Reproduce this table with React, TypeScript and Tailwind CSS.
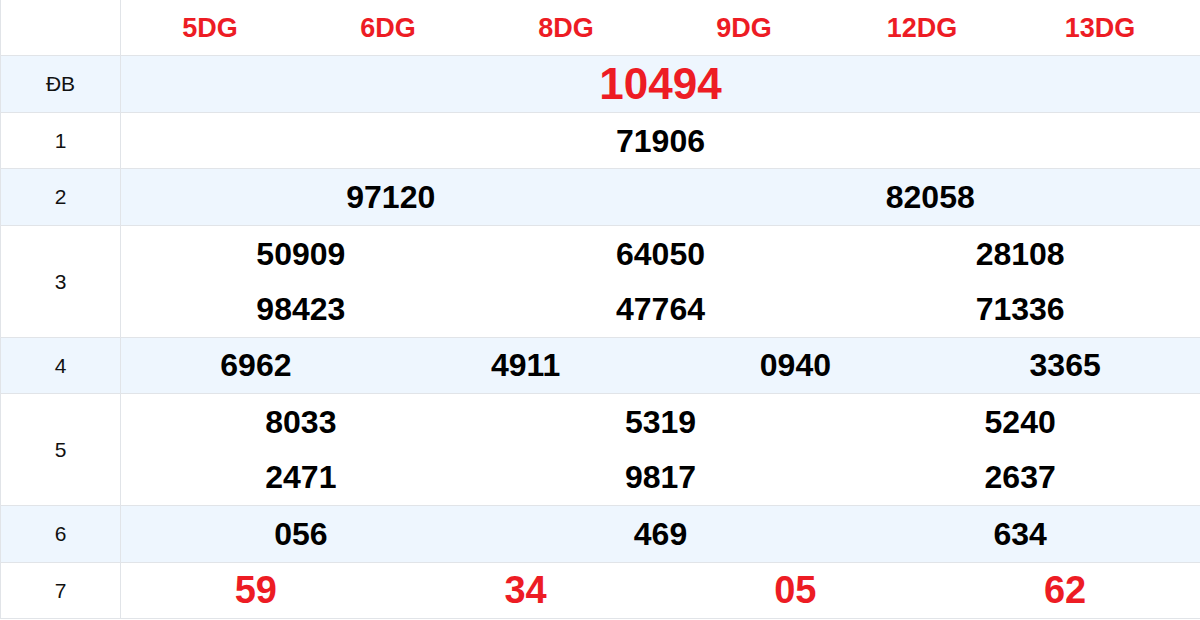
// Bảng kết quả xổ số — header mã vé + các giải ĐB..7.
const HEADERS = ["5DG", "6DG", "8DG", "9DG", "12DG", "13DG"];

type Prize = {
  label: string;
  // mỗi phần tử là một dòng số trong ô
  lines: string[][];
  cols: number;
  shaded?: boolean;
  size: "special" | "normal" | "small";
};

const PRIZES: Prize[] = [
  { label: "ĐB", lines: [["10494"]], cols: 1, shaded: true, size: "special" },
  { label: "1", lines: [["71906"]], cols: 1, size: "normal" },
  { label: "2", lines: [["97120", "82058"]], cols: 2, shaded: true, size: "normal" },
  {
    label: "3",
    lines: [
      ["50909", "64050", "28108"],
      ["98423", "47764", "71336"],
    ],
    cols: 3,
    size: "normal",
  },
  { label: "4", lines: [["6962", "4911", "0940", "3365"]], cols: 4, shaded: true, size: "normal" },
  {
    label: "5",
    lines: [
      ["8033", "5319", "5240"],
      ["2471", "9817", "2637"],
    ],
    cols: 3,
    size: "normal",
  },
  { label: "6", lines: [["056", "469", "634"]], cols: 3, shaded: true, size: "normal" },
  { label: "7", lines: [["59", "34", "05", "62"]], cols: 4, size: "small" },
];

const GRID_COLS: Record<number, string> = {
  1: "grid-cols-1",
  2: "grid-cols-2",
  3: "grid-cols-3",
  4: "grid-cols-4",
};

const SIZE_CLASS: Record<Prize["size"], string> = {
  special: "text-[44px] text-[#ed1c24]",
  normal: "text-[32px] text-black",
  small: "text-[38px] text-[#ed1c24]",
};

function PrizeRow({ prize }: { prize: Prize }) {
  const bg = prize.shaded ? "bg-[#eef6fe]" : "bg-white";
  return (
    <div
      className={`flex border-b border-[#e1e4e8] ${bg}`}
      style={{ flexGrow: prize.lines.length, flexBasis: 0 }}
    >
      <div className="flex w-[120px] shrink-0 items-center justify-center border-r border-[#e1e4e8] text-[21px] text-[#111]">
        {prize.label}
      </div>
      <div className="flex flex-1 flex-col">
        {prize.lines.map((line, i) => (
          <div key={i} className={`grid flex-1 ${GRID_COLS[prize.cols]}`}>
            {line.map((num, j) => (
              <div
                key={j}
                className={`flex items-center justify-center font-bold leading-none ${SIZE_CLASS[prize.size]}`}
              >
                {num}
              </div>
            ))}
          </div>
        ))}
      </div>
    </div>
  );
}

export default function App() {
  return (
    <div
      className="flex h-[619px] w-[1200px] flex-col border-l border-[#e1e4e8] bg-white"
      style={{ fontFamily: '"Liberation Sans", Arial, sans-serif' }}
    >
      <div className="flex border-b border-[#e1e4e8]" style={{ flexGrow: 1, flexBasis: 0 }}>
        <div className="w-[120px] shrink-0 border-r border-[#e1e4e8]" />
        <div className="grid w-[1068px] grid-cols-6 pt-[1px]">
          {HEADERS.map((h) => (
            <div
              key={h}
              className="flex items-center justify-center text-[27px] font-bold leading-none text-[#ed1c24]"
            >
              {h}
            </div>
          ))}
        </div>
      </div>
      {PRIZES.map((p) => (
        <PrizeRow key={p.label} prize={p} />
      ))}
    </div>
  );
}
